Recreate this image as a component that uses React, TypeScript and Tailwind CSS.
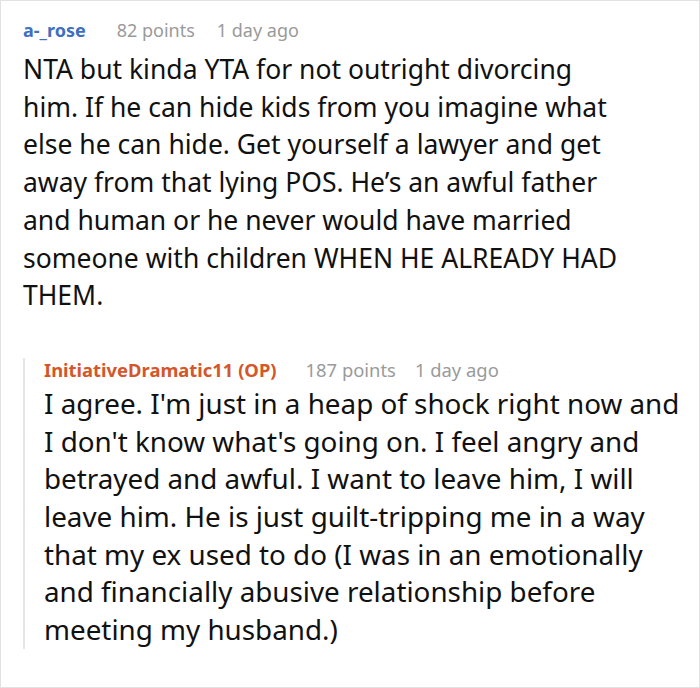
const font = { fontFamily: '"Noto Sans", "Open Sans", sans-serif' };

type CommentProps = {
  author: string;
  points: number;
  age: string;
  op?: boolean;
  className?: string;
  metaClass?: string;
  bodyClass?: string;
  children: React.ReactNode;
};

function Comment({
  author,
  points,
  age,
  op,
  className = "",
  metaClass = "gap-[22px]",
  bodyClass = "",
  children,
}: CommentProps) {
  return (
    <div className={className}>
      <div className="flex items-baseline leading-[24px]">
        <span
          className={`mr-[31px] font-bold ${op ? "text-[#d4562a]" : "text-[#3f6fbf]"}`}
        >
          {author}
        </span>
        <div className={`flex text-[#9a9a9a] ${metaClass}`}>
          <span>{points} points</span>
          <span>{age}</span>
        </div>
      </div>
      <p className={`leading-[37.7px] text-[#111] ${bodyClass}`}>{children}</p>
    </div>
  );
}

export default function App() {
  return (
    <div
      className="h-[688px] w-[700px] overflow-hidden border border-[#e2e2e2] bg-white"
      style={font}
    >
      <div className="pl-[22px] pr-[12px] pt-[17px]">
        <Comment
          author="a-_rose"
          points={82}
          age="1 day ago"
          className="max-w-[640px] text-[18px]"
          bodyClass="mt-[9px] text-[26.5px]"
        >
          NTA but kinda YTA for not outright divorcing
          <br />
          him. If he can hide kids from you imagine what
          <br />
          else he can hide. Get yourself a lawyer and get
          <br />
          away from that lying POS. He’s an awful father
          <br />
          and human or he never would have married
          <br />
          someone with children WHEN HE ALREADY HAD
          <br />
          THEM.
        </Comment>
        <div className="mt-[53px] border-l-2 border-[#e6e6e6] pl-[19px]">
          <Comment
            author="InitiativeDramatic11 (OP)"
            points={187}
            age="1 day ago"
            op
            className="-mt-[10px] text-[18.4px]"
            metaClass="-ml-[2px] gap-[19px]"
            bodyClass="mt-[3px] -mb-[17px] text-[27.8px]"
          >
            I agree. I'm just in a heap of shock right now and I don't know
            what's going on. I feel angry and betrayed and awful. I want to
            leave him, I will leave him. He is just guilt-tripping me in a way
            that my ex used to do (I was in an emotionally and financially
            abusive relationship before meeting my husband.)
          </Comment>
        </div>
      </div>
    </div>
  );
}
